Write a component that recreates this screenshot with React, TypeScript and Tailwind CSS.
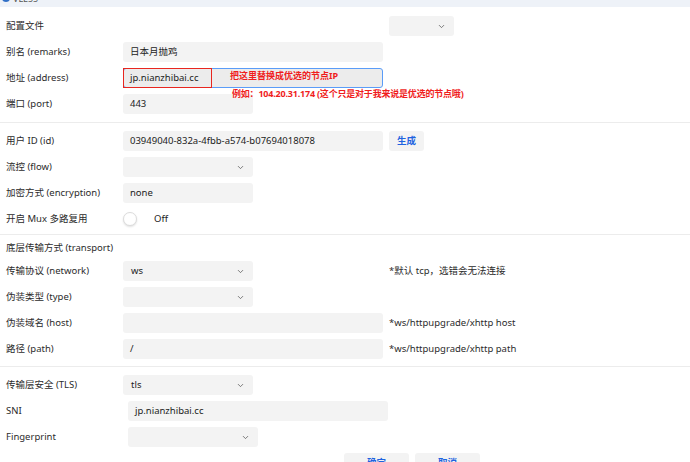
import { ChevronDown } from "lucide-react";

const font = "font-['Noto_Sans','Noto_Sans_CJK_SC',sans-serif]";

function Label({ children, w = "w-[117px]" }: { children: React.ReactNode; w?: string }) {
  return <div className={`${w} shrink-0 text-[9.5px] text-[#2b2b2b]`}>{children}</div>;
}

function Input({ value = "", w = "w-[260px]" }: { value?: string; w?: string }) {
  return (
    <div className={`${w} h-[20px] shrink-0 rounded-[3px] bg-[#f3f3f3] pl-[7px] flex items-center text-[9.5px] text-[#222]`}>
      {value}
    </div>
  );
}

function Select({ value = "", w = "w-[130px]" }: { value?: string; w?: string }) {
  return (
    <div className={`${w} h-[20px] shrink-0 rounded-[3px] bg-[#f3f3f3] pl-[8px] pr-[8px] flex items-center justify-between text-[9.5px] text-[#222]`}>
      <span>{value}</span>
      <ChevronDown className="w-[9px] h-[9px] text-[#555]" strokeWidth={2} />
    </div>
  );
}

function Row({ children, className = "" }: { children: React.ReactNode; className?: string }) {
  return <div className={`flex items-center h-[20px] pl-[6px] ${className}`}>{children}</div>;
}

function Note({ children }: { children: React.ReactNode }) {
  return <div className="ml-[6px] text-[9.5px] text-[#2b2b2b]">{children}</div>;
}

export default function App() {
  return (
    <div className={`w-[690px] h-[462px] overflow-hidden bg-white ${font}`}>
      {/* window title strip, mostly cut off */}
      <div className="h-[7px] bg-[#eef2f8] overflow-hidden flex items-end">
        <div className="flex items-center gap-[3px] pl-[2px] mb-[2px]">
          <div className="w-[8px] h-[8px] rounded-full bg-[#2f6fc6]" />
          <span className="text-[9px] text-[#555]">VLESS</span>
        </div>
      </div>

      <div className="pt-[9px] flex flex-col gap-[6px]">
        <Row>
          <Label w="w-[383px]">配置文件</Label>
          <Select w="w-[65px]" />
        </Row>
        <Row>
          <Label>别名 (remarks)</Label>
          <Input value="日本月抛鸡" />
        </Row>
        <Row>
          <Label>地址 (address)</Label>
          <div className="relative w-[260px] h-[20px] shrink-0 rounded-[3px] bg-[#ececec] border border-[#5a9cf8] pl-[6px] flex items-center text-[9.5px] text-[#222]">
            jp.nianzhibai.cc
            <div className="absolute left-[-1px] top-[-1px] w-[89px] h-[20px] border border-[#e8261f]" />
            <div className="absolute left-[106px] top-[0px] text-[9px] font-bold text-[#f01d1d] whitespace-nowrap">
              把这里替换成优选的节点IP
            </div>
            <div className="absolute left-[108px] top-[18px] text-[9px] font-bold text-[#f01d1d] whitespace-nowrap tracking-[-0.2px] z-10">
              例如：104.20.31.174 (这个只是对于我来说是优选的节点哦)
            </div>
          </div>
        </Row>
        <Row>
          <Label>端口 (port)</Label>
          <Input value="443" w="w-[130px]" />
        </Row>
      </div>

      <div className="mt-[8px] h-px bg-[#ececec]" />

      <div className="pt-[8px] flex flex-col gap-[6px]">
        <Row>
          <Label>用户 ID (id)</Label>
          <Input value="03949040-832a-4fbb-a574-b07694018078" />
          <div className="ml-[6px] w-[35px] h-[20px] rounded-[3px] bg-[#f3f3f3] flex items-center justify-center text-[9.5px] font-bold text-[#1f63e0]">
            生成
          </div>
        </Row>
        <Row>
          <Label>流控 (flow)</Label>
          <Select />
        </Row>
        <Row>
          <Label>加密方式 (encryption)</Label>
          <Input value="none" w="w-[130px]" />
        </Row>
        <Row>
          <Label>开启 Mux 多路复用</Label>
          <div className="w-[14px] h-[14px] rounded-full bg-white border border-[#dcdcdc] shadow-[0_1px_2px_rgba(0,0,0,0.12)]" />
          <span className="ml-[17px] text-[9.5px] text-[#222]">Off</span>
        </Row>
      </div>

      <div className="mt-[5px] h-px bg-[#ececec]" />

      <div className="pt-[3px] flex flex-col gap-[3px]">
        <Row>
          <Label>底层传输方式 (transport)</Label>
        </Row>
        <div className="flex flex-col gap-[6px]">
          <Row>
            <Label>传输协议 (network)</Label>
            <Select value="ws" />
            <div className="ml-[136px] text-[9.5px] text-[#2b2b2b]">*默认 tcp，选错会无法连接</div>
          </Row>
          <Row>
            <Label>伪装类型 (type)</Label>
            <Select />
          </Row>
          <Row>
            <Label>伪装域名 (host)</Label>
            <Input />
            <Note>*ws/httpupgrade/xhttp host</Note>
          </Row>
          <Row>
            <Label>路径 (path)</Label>
            <Input value="/" />
            <Note>*ws/httpupgrade/xhttp path</Note>
          </Row>
        </div>
      </div>

      <div className="mt-[7px] h-px bg-[#ececec]" />

      <div className="pt-[8px] flex flex-col gap-[6px]">
        <Row>
          <Label>传输层安全 (TLS)</Label>
          <Select value="tls" />
        </Row>
        <Row>
          <Label w="w-[122px]">SNI</Label>
          <Input value="jp.nianzhibai.cc" />
        </Row>
        <Row>
          <Label w="w-[122px]">Fingerprint</Label>
          <Select />
        </Row>
        <div className="flex gap-[6px] pl-[344px]">
          <div className="w-[65px] h-[20px] rounded-[3px] bg-[#f3f3f3] flex items-center justify-center text-[9.5px] font-bold text-[#1f63e0]">
            确定
          </div>
          <div className="w-[65px] h-[20px] rounded-[3px] bg-[#f3f3f3] flex items-center justify-center text-[9.5px] font-bold text-[#1f63e0]">
            取消
          </div>
        </div>
      </div>
    </div>
  );
}
